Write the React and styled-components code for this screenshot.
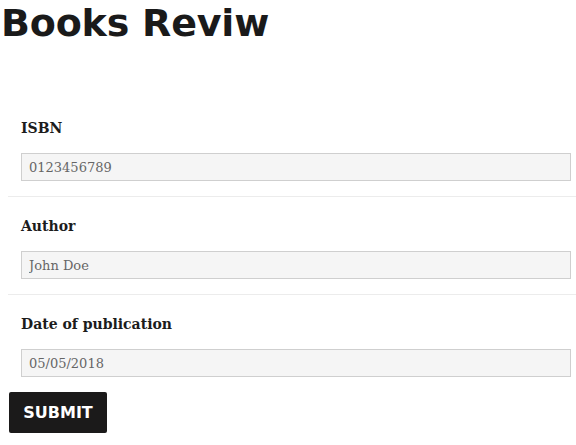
import React from "react";
import styled, { createGlobalStyle } from "styled-components";

const GlobalStyle = createGlobalStyle`
  html, body {
    margin: 0;
    padding: 0;
    background: #ffffff;
  }
`;

const Page = styled.div`
  width: 576px;
  overflow: hidden;
`;

const Title = styled.h1`
  margin: 0 0 0 1px;
  font-family: "DejaVu Sans", sans-serif;
  font-weight: bold;
  font-size: 38px;
  line-height: 46px;
  letter-spacing: -0.2px;
  color: #1a1a1a;
`;

const Form = styled.form`
  margin: 53px 0 0 8px;
  display: flex;
  flex-direction: column;
  align-items: flex-start;
`;

const Field = styled.div`
  align-self: stretch;
  display: flex;
  flex-direction: column;
  padding: 17px 5px 15px 13px;
  border-bottom: ${(p) => (p.last ? "none" : "1px solid #ececec")};
`;

const Label = styled.label`
  font-family: "DejaVu Serif", serif;
  font-weight: bold;
  font-size: 14px;
  line-height: 24px;
  color: #1c1c1c;
  margin-bottom: 13px;
`;

const Input = styled.input`
  box-sizing: border-box;
  height: 28px;
  width: 100%;
  margin: 0;
  padding: 0 7px;
  border: 1px solid #cfcfcf;
  border-radius: 0;
  background: #f5f5f5;
  font-family: "DejaVu Serif", serif;
  font-size: 13px;
  color: #666666;
  outline: none;
`;

const Button = styled.button`
  margin-left: 1px;
  width: 98px;
  height: 41px;
  border: none;
  border-radius: 2px;
  background: #1b1a1a;
  color: #ffffff;
  font-family: "DejaVu Sans", sans-serif;
  font-weight: bold;
  font-size: 16px;
  cursor: pointer;
`;

const fields = [
  { id: "isbn", label: "ISBN", value: "0123456789" },
  { id: "author", label: "Author", value: "John Doe" },
  { id: "date", label: "Date of publication", value: "05/05/2018" },
];

export default function App() {
  return (
    <Page>
      <GlobalStyle />
      <Title>Books Reviw</Title>
      <Form onSubmit={(e) => e.preventDefault()}>
        {fields.map((f, i) => (
          <Field key={f.id} last={i === fields.length - 1}>
            <Label htmlFor={f.id}>{f.label}</Label>
            <Input id={f.id} defaultValue={f.value} />
          </Field>
        ))}
        <Button type="submit">SUBMIT</Button>
      </Form>
    </Page>
  );
}
